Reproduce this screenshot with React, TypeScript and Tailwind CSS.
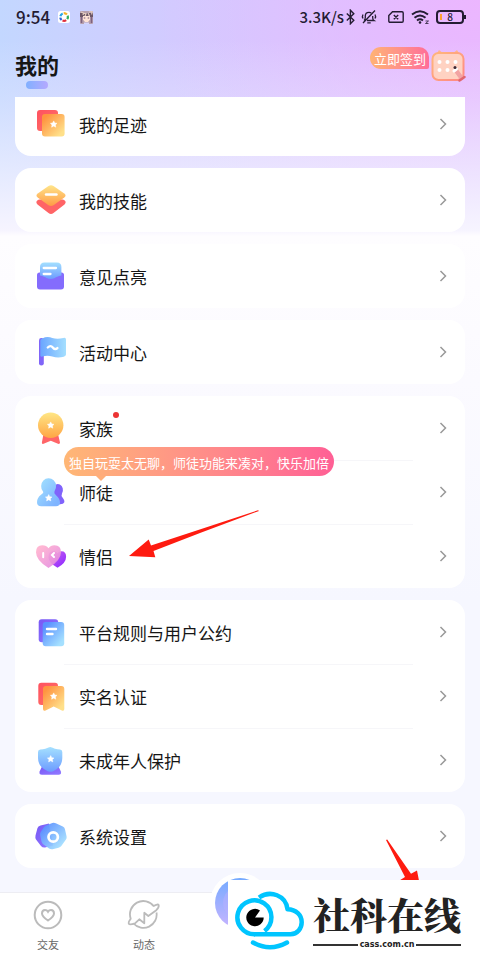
import type { ReactNode } from 'react';

const STAR = 'M0-3.4 1.1-1.3 3.3-1 1.7.6 2.1 2.9 0 1.8-2.1 2.9-1.7.6-3.3-1-1.1-1.3Z';

const Star = ({ x, y }: { x: number; y: number }) => (
  <path
    d={STAR}
    transform={`translate(${x} ${y})`}
    fill="#fff"
    stroke="#fff"
    strokeWidth=".5"
    strokeLinejoin="round"
  />
);

type GradientProps = { id: string; from: string; to: string; angle?: number };

const Gradient = ({ id, from, to, angle = 45 }: GradientProps) => (
  <linearGradient id={id} gradientTransform={`rotate(${angle} .5 .5)`}>
    <stop offset="0" stopColor={from} />
    <stop offset="1" stopColor={to} />
  </linearGradient>
);

const Defs = () => (
  <svg className="absolute size-0" aria-hidden="true">
    <defs>
      <Gradient id="orange" from="#ff9440" to="#ffe08a" />
      <Gradient id="gold" from="#ffe58a" to="#ff9a45" angle={90} />
      <Gradient id="medal" from="#ffe684" to="#ffa545" angle={90} />
      <Gradient id="red" from="#ff5560" to="#ff7068" />
      <Gradient id="sky" from="#5b92ff" to="#a5e0ff" />
      <Gradient id="skyFlat" from="#6aa5ff" to="#a4dfff" angle={0} />
      <Gradient id="skyDown" from="#a4e0ff" to="#6c9bff" angle={90} />
      <Gradient id="skyTurn" from="#9ddcff" to="#7fb4ff" />
      <Gradient id="violet" from="#7c5cf6" to="#8d76ff" />
      <Gradient id="pink" from="#ffb0cf" to="#e58ee0" />
      <Gradient id="purple" from="#c45cf0" to="#9430ff" />
      <Gradient id="center" from="#74aaff" to="#c7b4ff" angle={90} />
      <Gradient id="calendar" from="#ffb27c" to="#ff8e83" />
    </defs>
  </svg>
);

const icons: Record<string, ReactNode> = {
  footprint: (
    <>
      <rect x="2" y="2" width="21" height="21" rx="3" fill="url(#red)" />
      <rect x="7" y="6" width="22.6" height="22.5" rx="3" fill="url(#orange)" />
      <Star x={18.7} y={16.3} />
    </>
  ),
  skill: (
    <>
      <path d="M4 15.500h24q4.500 2 1.500 5L18.500 29q-2.500 2-5 0L2.500 20.500q-3-3 1.500-5Z" fill="#ff6466" />
      <path d="M13.500 2q2.500-1.600 5 0l10.800 7.500q2.500 2 0 4L18.500 21.300q-2.500 1.600-5 0L2.700 13.500q-2.500-2 0-4Z" fill="url(#gold)" />
      <path d="M11 10.500h10.500" stroke="#fff" strokeWidth="2.400" strokeLinecap="round" />
    </>
  ),
  feedback: (
    <>
      <path d="M2 15q0-2.500 2.500-2.500h22q2.500 0 2.500 2.500v11.500q0 3-3 3H5q-3 0-3-3Z" fill="#846cfd" />
      <path d="M5 7q0-4.600 4.500-4.600h12.400q4.500 0 4.500 4.600v8.500q-5 1-6.500 2.500-4.200 2.200-8.400 0-1.500-1.500-6.500-2.500Z" fill="url(#skyDown)" />
      <path d="M8.700 8h12.300M8.700 14h6.800" stroke="#fff" strokeWidth="2.300" strokeLinecap="round" />
    </>
  ),
  flag: (
    <>
      <rect x="4" y="2" width="4.800" height="27.600" rx="2.400" fill="#8065f8" />
      <path d="M5.300 4.500q0-1.500 2-2.100 5-2.400 10-.4 5 1.600 11 0 2.700-.8 2.700 1.400v15.200q0 1.600-2.200 2.100-6 1.500-11.500-.2-5-1.700-10 0-2 .5-2-1Z" fill="url(#skyFlat)" />
      <path d="M12.800 11.500q2.800-2.800 5 0t4.600.6" stroke="#fff" strokeWidth="2.400" fill="none" strokeLinecap="round" />
    </>
  ),
  medal: (
    <>
      <path d="M8.500 22h14.500l2 8.500q0 1.800-2 1.300l-7.200-3-7.200 3q-2 .5-1.700-1.300Z" fill="#ff6568" />
      <circle cx="15.700" cy="13.300" r="12.700" fill="url(#medal)" />
      <Star x={15.7} y={13.3} />
    </>
  ),
  mentor: (
    <>
      <path d="M18 13a5 6 0 1 1 9 4.500q-1 2 .5 4 2.500 3 1.700 5-.6 1.700-4 1.700H17Z" fill="#8063fb" />
      <path d="M8 15.500a7.500 8 0 1 1 11.500-.3q-1 1.800 1.500 4 4 3.500 4 7.300 0 3.800-4 3.800H6.200q-4.200 0-4.200-4 0-4.500 4-7.500 3-2 2-3.300Z" fill="url(#skyTurn)" />
      <Star x={13.7} y={22} />
    </>
  ),
  couple: (
    <>
      <path d="M22.500 27.700q-9-5-9-10.500 0-6 4.500-6 3 0 4.500 2 1.500-2 4-2 4.600 0 4.600 5.500 0 6.300-8.600 11Z" fill="url(#purple)" />
      <path d="M13.500 28Q1 20.500 1 12.300 1 5.300 7.300 5.300q4.200 0 6.200 3 2-3 6-3 6.500 0 6.500 7 0 8.200-12.500 15.700Z" fill="url(#pink)" fillOpacity=".92" />
      <path d="M8.200 13v4.200M19 13l-2 2 2 2" stroke="#fff" strokeWidth="2" fill="none" strokeLinecap="round" />
    </>
  ),
  rules: (
    <>
      <rect x="3.700" y="3.300" width="19.500" height="23" rx="3" fill="url(#violet)" />
      <rect x="7.700" y="6" width="21.500" height="24.300" rx="3" fill="url(#sky)" />
      <path d="M12 13h9M12 18h5.500" stroke="#fff" strokeWidth="2.400" strokeLinecap="round" />
    </>
  ),
  identity: (
    <>
      <rect x="3.300" y="2.700" width="19.700" height="22.300" rx="3" fill="url(#red)" />
      <path d="M8 9q0-3 3-3h15.300q3 0 3 3v20q0 2.500-2.500 1.500l-8.100-4-8.100 4q-2.600 1-2.600-1.500Z" fill="url(#orange)" />
      <Star x={18.7} y={16.3} />
    </>
  ),
  shield: (
    <>
      <path d="M7 22.500h16.500l2.400 5q.8 3.200-2.400 3.200H7q-3.200 0-2.400-3.200Z" fill="url(#violet)" />
      <path d="M13.500 3.500q1.800-.8 3.500 0l3 1.200q2.500.8 5 .8 2.300.3 2.300 2.500v6q0 9-9 13.200-2.900 1-5.500 0Q3 23 3 14V8q0-2.200 2.300-2.500 2.500 0 5-.8Z" fill="url(#skyDown)" />
      <Star x={15.7} y={15} />
    </>
  ),
  settings: (
    <>
      <path d="M5.500 5.500 14 3.600l4 22-8 1.900q-2.500.3-4-1.500l-5-6.500q-1-1.700-.5-4l2-7.500q.5-2 3-2.500Z" fill="url(#violet)" />
      <path d="m11 5.500 6.300-2.500q1.700-.6 3.500.2l7 3.200q1.700.8 2.100 2.600l1.700 7.500q.4 1.800-.8 3.300l-4.500 6.200q-1 1.300-2.700 1.700l-6 1.500q-2 .3-3.500-.7l-5.600-4q-1.500-1-2-3L5.100 15q-.3-1.800.8-3.300L9 7q.7-1 2-1.500Z" fill="url(#sky)" fillOpacity=".93" />
      <circle cx="18.200" cy="17" r="4.700" stroke="#fff" strokeWidth="2.700" fill="none" />
    </>
  ),
};

type Item = { icon: string; label: string; dot?: boolean; tip?: string; marked?: boolean };

const groups: Item[][] = [
  [{ icon: 'skill', label: '我的技能' }],
  [{ icon: 'feedback', label: '意见点亮' }],
  [{ icon: 'flag', label: '活动中心' }],
  [
    { icon: 'medal', label: '家族', dot: true },
    { icon: 'mentor', label: '师徒', tip: '独自玩耍太无聊，师徒功能来凑对，快乐加倍' },
    { icon: 'couple', label: '情侣', marked: true },
  ],
  [
    { icon: 'rules', label: '平台规则与用户公约' },
    { icon: 'identity', label: '实名认证' },
    { icon: 'shield', label: '未成年人保护' },
  ],
  [{ icon: 'settings', label: '系统设置' }],
];

const Row = ({ item }: { item: Item }) => (
  <a href="#" className="flex h-16 items-center gap-3 pr-[18px] pl-5">
    <svg className="size-8 shrink-0 overflow-visible" viewBox="0 0 32 32" aria-hidden="true">
      {icons[item.icon]}
    </svg>
    <span className="relative pt-px text-[17px] leading-6 text-[#161616]">
      {item.label}
      {item.dot && <i className="absolute -top-1 -right-1.5 size-1.5 rounded-full bg-[#ec3434]" />}
    </span>
    <svg className="ml-auto h-3 w-2 shrink-0" viewBox="0 0 8 12" fill="none" aria-hidden="true">
      <path d="m1.500 1 5 5-5 5" stroke="#999" strokeWidth="1.500" />
    </svg>
  </a>
);

const Card = ({ items }: { items: Item[] }) => (
  <ul className="rounded-2xl bg-white">
    {items.map((item, index) => (
      <li key={item.label} className="relative">
        {index > 0 && <hr className="-mb-px ml-[49px] mr-[52px] border-[#f6f6f9]" />}
        <Row item={item} />
        {item.tip && (
          <p className="absolute -top-[13px] left-[49px] flex h-[29px] w-[270px] items-center justify-center rounded-full bg-linear-to-r from-[#ffb775] to-[#ff5f95] pt-0.5 text-[13px] whitespace-nowrap text-white">
            {item.tip}
            <i className="absolute top-full left-8 border-x-[5px] border-t-[5px] border-x-transparent border-t-[#ffae79]" />
          </p>
        )}
        {item.marked && (
          <svg
            className="absolute -top-[14px] left-[113px]"
            width="132"
            height="50"
            viewBox="128 510 132 50"
            aria-hidden="true"
          >
            <path d="m129 556 19.700-16.500 2.300 6L258 510.300l1 .7L200 533l-46.500 18 1.800 6.300Z" fill="#fe1b10" />
          </svg>
        )}
      </li>
    ))}
  </ul>
);

const StatusBar = () => (
  <div className="flex h-[34px] items-center px-4 text-[#241c33]">
    <time className="text-[17px] font-medium">9:54</time>
    <svg className="ml-2 size-3" viewBox="0 0 12 12" aria-hidden="true">
      <rect width="12" height="12" rx="2.500" fill="#fff" />
      <g fill="none" strokeWidth="2.200">
        <path d="M2.400 5.300a4 4 0 0 1 2.300-2.900" stroke="#2aa5e8" />
        <path d="M5.700 2.100a4 4 0 0 1 3.200 1.400" stroke="#f3b32b" />
        <path d="M9.700 4.600a4 4 0 0 1-.5 3.600" stroke="#2fae61" />
        <path d="M8.200 9.200a4 4 0 0 1-3.700.4" stroke="#e02f3d" />
        <path d="M3.600 9a4 4 0 0 1-1.300-2.400" stroke="#2d62d8" />
      </g>
    </svg>
    <svg className="ml-2.5 size-[13px]" viewBox="0 0 13 13" aria-hidden="true">
      <rect width="13" height="13" rx="1" fill="#b7a0ae" />
      <path d="M0 2h13v4H0Z" fill="#6d5766" />
      <path d="m1 1 2.500 1L3 4M9 1l3-.5-.3 3M4 2.500h2l-1 3M8 2l1.500 3" stroke="#e3cbbf" strokeWidth="1.200" fill="none" />
      <path d="M3 5h7v3.500L8 11H5L3 8.500Z" fill="#ffe3d6" />
      <path d="M3.800 7h1.500M7.700 7h1.500" stroke="#735973" strokeWidth="1.200" />
      <path d="M1.500 6v6M11.500 6v6" stroke="#7f6280" strokeWidth="1.500" />
      <path d="M4 11.500h5V13H4Z" fill="#d6d5fb" />
    </svg>
    <span className="ml-auto text-[15px] font-medium">3.3K/s</span>
    <svg className="ml-0.5 h-4 w-[9px]" viewBox="0 0 9 16" fill="none" stroke="currentColor" strokeWidth="1.400" aria-hidden="true">
      <path d="m.8 4.500 7 6.800-3.400 3.500V1.200L7.800 4.700l-7 6.800" />
    </svg>
    <svg className="ml-1.5 size-4" viewBox="0 0 16 16" fill="none" stroke="currentColor" strokeWidth="1.300" aria-hidden="true">
      <path d="M3 11.500q1.300-1 1.300-3V7Q4.300 3.300 8 3.300q1.500 0 2.300.7M11.700 7v1.700q0 2 1.300 2.800H6M6.300 13.800h3.400M14 1.500 2 14M2 5.500Q.8 7.500 2 9.500M14 5.500q1.200 2 0 4" />
    </svg>
    <svg className="ml-[11px] h-3 w-4" viewBox="0 0 16 12" fill="none" stroke="currentColor" strokeWidth="1.400" aria-hidden="true">
      <path d="M4.500.8H14q1.200 0 1.200 1.200v8q0 1.200-1.200 1.200H2Q.8 11.200.8 10V4.500ZM5.800 4l4.400 4.200M10.200 4 5.800 8.200" />
    </svg>
    <svg className="ml-[7px] h-4 w-[19px]" viewBox="0 0 19 16" fill="none" stroke="currentColor" strokeWidth="2" aria-hidden="true">
      <path d="M1 5.500q8-6.500 16 0M3.500 8.700q5.500-4.500 11 0M6 11.500q3-2.400 6 0" />
      <circle cx="9" cy="13.500" r="1.300" fill="currentColor" stroke="none" />
      <path d="M14.500 12h3l-3 2.500h3" strokeWidth=".8" />
    </svg>
    <span className="relative ml-1.5 flex h-[14px] w-7 items-center justify-center rounded-sm border-2 border-current text-[10px] leading-none font-medium">
      <i className="absolute top-0.5 bottom-0.5 left-0.5 w-0.5 bg-[#ffa12e]" />
      8
      <i className="absolute -right-1 h-1 w-0.5 bg-current" />
    </span>
  </div>
);

const CheckIn = () => (
  <button type="button" className="flex items-start">
    <span className="flex h-[22px] items-center rounded-l-[11px] rounded-tr-[10px] rounded-br-xs bg-linear-to-r from-[#ffb374] to-[#ff6c99] pt-px pr-[3px] pl-1 text-[13px] leading-none text-white">
      立即签到
    </span>
    <svg className="mt-0.5 ml-0.5" width="35" height="35" viewBox="0 0 35 35" aria-hidden="true">
      <path d="m5.500 5 2.500-4 5 4ZM21 5l5-4 2.500 4Z" fill="#ffb58c" />
      <rect x="1.500" y="4" width="31" height="27" rx="6" fill="#ffd2c2" stroke="url(#calendar)" strokeWidth="2" />
      <g fill="#fff">
        <circle cx="8.500" cy="13" r="2" />
        <circle cx="16.500" cy="13" r="2" />
        <circle cx="24.500" cy="13" r="2" />
        <circle cx="8.500" cy="21" r="2" />
        <circle cx="16.500" cy="21" r="2" />
      </g>
      <path d="m25 21.500 5.500 7.500" stroke="#f2a3a3" strokeWidth="4.500" strokeLinecap="round" />
      <path d="m28.500 31.500 5-3.500" stroke="#e0656f" strokeWidth="2.500" strokeLinecap="round" />
      <path d="m23 22 2.500-2" stroke="#fff" strokeWidth="3" strokeLinecap="round" />
      <circle cx="24" cy="18.500" r="1.500" fill="#3d2833" />
    </svg>
  </button>
);

const Header = () => (
  <header className="h-[97px]">
    <StatusBar />
    <div className="flex items-start justify-between pr-[14px] pl-[15px]">
      <h1 className="mt-[13px] flex flex-col items-center text-[22px] leading-[34px] font-bold text-[#161616]">
        我的
        <i className="h-2 w-[22px] rounded-full bg-linear-to-r from-[#80b0ff] to-[#b4a9ff]" />
      </h1>
      <div className="mt-[13px]">
        <CheckIn />
      </div>
    </div>
  </header>
);

const Watermark = () => (
  <div className="absolute right-0 bottom-0 flex h-20 w-[252px] items-center bg-white pl-[7px]">
    <svg className="h-[60px] w-[70px] shrink-0" viewBox="235 892 70 60" fill="none" aria-hidden="true">
      <g stroke="#00c5ff" strokeWidth="4.500">
        <path d="M255 936.300a17 17 0 1 1 9.500-3.300" />
        <path d="M254 936.200h36.500c7 0 11.200-6 11.200-12 0-7-5.500-12.700-14.200-12.900-1.500-14-17-19.500-28.500-11.800" strokeLinejoin="round" />
        <path d="M253 944.500q17 9.500 34 0" strokeLinecap="round" />
      </g>
      <path d="M255 919.500h8.700a8.700 8.700 0 1 1-3.700-7.100Z" fill="#000" />
    </svg>
    <div className="ml-2 flex w-[148px] flex-col">
      <strong className="text-[37px] leading-[50px] font-black whitespace-nowrap text-[#222] [font-family:'Noto_Serif_CJK_SC','Noto_Sans_CJK_SC',serif]">
        社科在线
      </strong>
      <span className="flex items-center gap-0.5 text-[8px] leading-3 font-bold text-[#222] [font-family:'DejaVu_Sans',sans-serif]">
        <i className="h-0.5 flex-1 bg-[#333]" />
        cass.com.cn
        <i className="h-0.5 flex-1 bg-[#333]" />
      </span>
    </div>
  </div>
);

const TabBar = () => (
  <nav className="relative mt-auto flex h-[68px] border-t border-[#ededf3] bg-white text-[11px] text-[#666]">
    <a href="#" className="flex w-1/5 flex-col items-center pt-[7px]">
      <svg width="30" height="30" viewBox="0 0 30 30" fill="none" stroke="#bbb" strokeWidth="2" aria-hidden="true">
        <circle cx="15" cy="15" r="13.300" />
        <path d="M15 20.500q-6-4-6-7 0-3.500 3-3.500 2 0 3 1.800Q16 10 18 10q3 0 3 3.500 0 3-6 7Z" />
      </svg>
      <span className="mt-1.5 leading-4">交友</span>
    </a>
    <a href="#" className="flex w-1/5 flex-col items-center pt-[7px]">
      <svg width="34" height="30" viewBox="0 0 34 30" fill="none" stroke="#bbb" strokeWidth="1.800" strokeLinejoin="round" aria-hidden="true">
        <path d="M27 6.500A13.300 13.300 0 0 0 3.800 19M29.500 12.500A13.300 13.300 0 0 1 6.500 23.500" />
        <path d="M26.500 6q4.500-2.500 5.200-.8.500 2-2.400 5L21.300 16l-4-3.300v10.600l-5-4-4.300 4q-5.500 2-6.200.4-.6-2 2.200-5.200" />
      </svg>
      <span className="mt-1.5 leading-4">动态</span>
    </a>
    <button type="button" aria-label="首页" className="absolute -top-5 left-1/2 -translate-x-1/2 rounded-full bg-white p-[5px]">
      <svg width="50" height="50" viewBox="0 0 50 50" aria-hidden="true">
        <circle cx="25" cy="25" r="25" fill="url(#center)" />
        <circle cx="25" cy="25" r="17" fill="#b8b0ff" fillOpacity=".5" />
      </svg>
    </button>
    <svg className="absolute -top-[54px] right-[58px]" width="37" height="52" viewBox="385 838 37 52" aria-hidden="true">
      <path d="m386 839 1.200-.5L411 872.800l6-3.300 4 20.500-22-10.300 6-3.700Z" fill="#fe1b10" />
    </svg>
    <Watermark />
  </nav>
);

const App = () => (
  <div className="relative flex min-h-screen flex-col bg-[linear-gradient(to_bottom,#f4f3ff00_40px,#f4f3ff40_100px,#f4f3ff99_160px,#f6f4ff_230px,#fefdff_236px,#fbfaff_380px,#f6f7ff_600px),radial-gradient(circle_at_100%_0,#ecb6ff_0,#ecb6ff00_320px),linear-gradient(to_right,#c3d7ff_0,#d2cbff_35%,#d5c8ff_100%)] font-['Noto_Sans_CJK_SC',sans-serif]">
    <Defs />
    <Header />
    <main className="flex flex-col gap-3 px-[15px] pb-6">
      <div className="rounded-b-2xl bg-white">
        <div className="-mt-[5px]">
          <Row item={{ icon: 'footprint', label: '我的足迹' }} />
        </div>
      </div>
      {groups.map((items) => (
        <Card key={items[0].label} items={items} />
      ))}
    </main>
    <TabBar />
  </div>
);

export default App;
